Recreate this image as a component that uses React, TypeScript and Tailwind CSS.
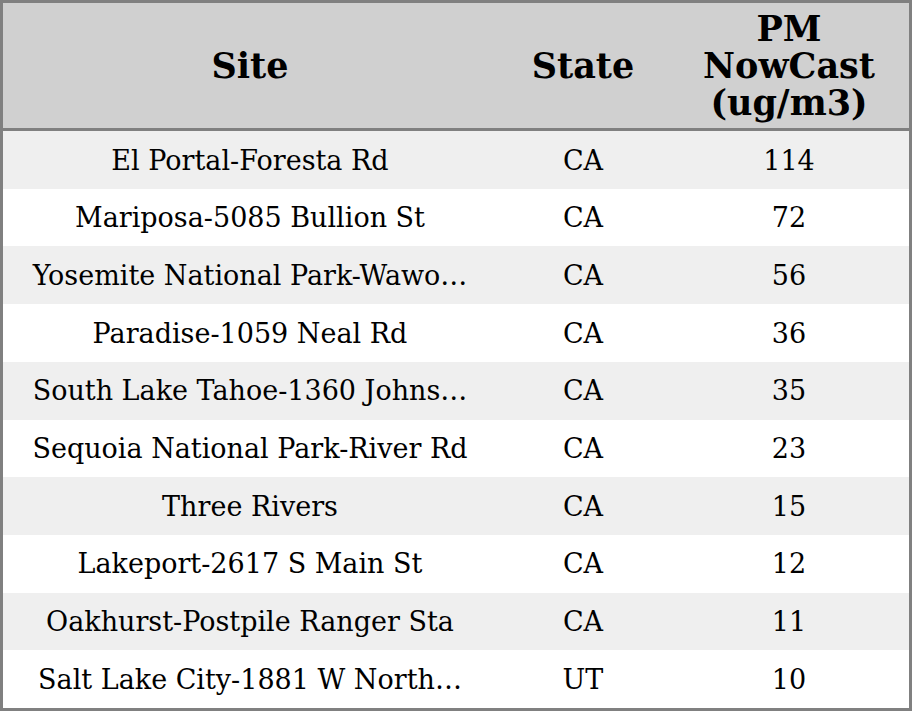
const rows = [
  { site: "El Portal-Foresta Rd", state: "CA", pm: 114 },
  { site: "Mariposa-5085 Bullion St", state: "CA", pm: 72 },
  { site: "Yosemite National Park-Wawo…", state: "CA", pm: 56 },
  { site: "Paradise-1059 Neal Rd", state: "CA", pm: 36 },
  { site: "South Lake Tahoe-1360 Johns…", state: "CA", pm: 35 },
  { site: "Sequoia National Park-River Rd", state: "CA", pm: 23 },
  { site: "Three Rivers", state: "CA", pm: 15 },
  { site: "Lakeport-2617 S Main St", state: "CA", pm: 12 },
  { site: "Oakhurst-Postpile Ranger Sta", state: "CA", pm: 11 },
  { site: "Salt Lake City-1881 W North…", state: "UT", pm: 10 },
];

export default function App() {
  return (
    <div
      className="w-[912px] h-[711px] bg-white text-black"
      style={{ fontFamily: '"DejaVu Serif", serif' }}
    >
      <div className="w-[912px] h-[711px] border-[3px] border-[#808080] flex flex-col">
        {/* Header */}
        <div className="grid grid-cols-[494px_172px_240px] h-[128px] shrink-0 bg-[#d0d0d0] border-b-[3px] border-[#808080] font-bold text-[35px] leading-[37px]">
          <div className="flex items-center justify-center">Site</div>
          <div className="flex items-center justify-center">State</div>
          <div className="flex items-center justify-center text-center">
            PM
            <br />
            NowCast
            <br />
            (ug/m3)
          </div>
        </div>

        {/* Body */}
        <div className="grid grid-rows-10 flex-1 text-[27px]">
          {rows.map((row, i) => (
            <div
              key={row.site}
              className={`grid grid-cols-[494px_172px_240px] items-center pt-[2px] ${
                i % 2 === 0 ? "bg-[#efefef]" : "bg-white"
              }`}
            >
              <div className="text-center whitespace-nowrap">{row.site}</div>
              <div className="text-center">{row.state}</div>
              <div className="text-center">{row.pm}</div>
            </div>
          ))}
        </div>
      </div>
    </div>
  );
}
